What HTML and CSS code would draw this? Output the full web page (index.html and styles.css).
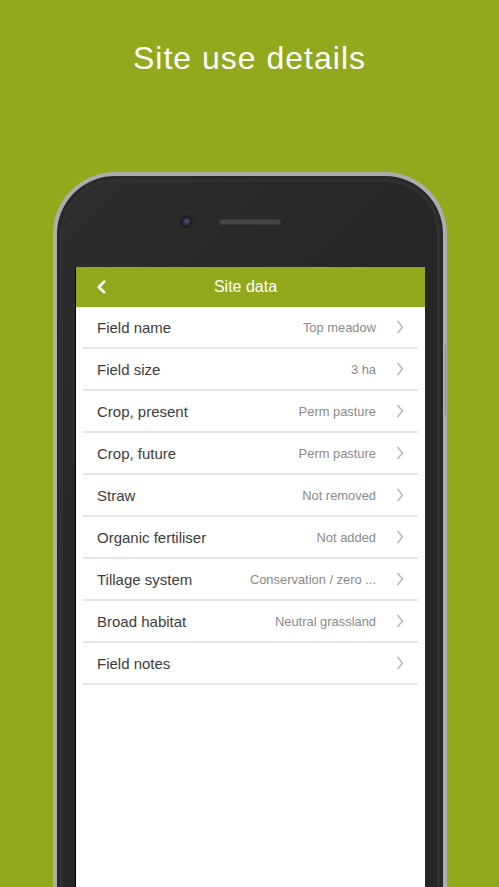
FILE: index.html
```html
<!DOCTYPE html>
<html lang="en">
<head>
<meta charset="utf-8">
<title>Site use details</title>
<link rel="stylesheet" href="styles.css">
</head>
<body>
  <h1 class="page-title">Site use details</h1>
  <div class="phone">
    <div class="phone-top">
      <span class="camera"></span>
      <span class="speaker"></span>
      <span class="spacer"></span>
    </div>
    <div class="screen">
      <header class="app-bar">
        <span class="back">
          <svg width="12" height="16" viewBox="0 0 12 16"><path d="M9.8 1.6 L3.4 8 L9.8 14.4" fill="none" stroke="#fff" stroke-width="3.2" stroke-linecap="round" stroke-linejoin="round"/></svg>
        </span>
        <span class="app-title">Site data</span>
        <span></span>
      </header>
      <ul class="list">
        <li class="row"><span class="label">Field name</span><span class="value">Top meadow</span><svg class="chev" width="8" height="14" viewBox="0 0 8 14"><path d="M1.5 1 L6.5 7 L1.5 13" fill="none" stroke="#b8b8b8" stroke-width="1.5"/></svg></li>
        <li class="row"><span class="label">Field size</span><span class="value">3 ha</span><svg class="chev" width="8" height="14" viewBox="0 0 8 14"><path d="M1.5 1 L6.5 7 L1.5 13" fill="none" stroke="#b8b8b8" stroke-width="1.5"/></svg></li>
        <li class="row"><span class="label">Crop, present</span><span class="value">Perm pasture</span><svg class="chev" width="8" height="14" viewBox="0 0 8 14"><path d="M1.5 1 L6.5 7 L1.5 13" fill="none" stroke="#b8b8b8" stroke-width="1.5"/></svg></li>
        <li class="row"><span class="label">Crop, future</span><span class="value">Perm pasture</span><svg class="chev" width="8" height="14" viewBox="0 0 8 14"><path d="M1.5 1 L6.5 7 L1.5 13" fill="none" stroke="#b8b8b8" stroke-width="1.5"/></svg></li>
        <li class="row"><span class="label">Straw</span><span class="value">Not removed</span><svg class="chev" width="8" height="14" viewBox="0 0 8 14"><path d="M1.5 1 L6.5 7 L1.5 13" fill="none" stroke="#b8b8b8" stroke-width="1.5"/></svg></li>
        <li class="row"><span class="label">Organic fertiliser</span><span class="value">Not added</span><svg class="chev" width="8" height="14" viewBox="0 0 8 14"><path d="M1.5 1 L6.5 7 L1.5 13" fill="none" stroke="#b8b8b8" stroke-width="1.5"/></svg></li>
        <li class="row"><span class="label">Tillage system</span><span class="value">Conservation / zero ...</span><svg class="chev" width="8" height="14" viewBox="0 0 8 14"><path d="M1.5 1 L6.5 7 L1.5 13" fill="none" stroke="#b8b8b8" stroke-width="1.5"/></svg></li>
        <li class="row"><span class="label">Broad habitat</span><span class="value">Neutral grassland</span><svg class="chev" width="8" height="14" viewBox="0 0 8 14"><path d="M1.5 1 L6.5 7 L1.5 13" fill="none" stroke="#b8b8b8" stroke-width="1.5"/></svg></li>
        <li class="row"><span class="label">Field notes</span><span class="value"></span><svg class="chev" width="8" height="14" viewBox="0 0 8 14"><path d="M1.5 1 L6.5 7 L1.5 13" fill="none" stroke="#b8b8b8" stroke-width="1.5"/></svg></li>
      </ul>
    </div>
  </div>
</body>
</html>
```

FILE: styles.css
```css
* { box-sizing: border-box; }
html, body {
  margin: 0;
  padding: 0;
}
body {
  background: #92a81d;
  height: 887px;
  overflow: hidden;
  font-family: "Liberation Sans", Arial, sans-serif;
}
.page-title {
  margin: 0;
  padding-top: 40px;
  line-height: 36px;
  font-size: 32px;
  font-weight: normal;
  letter-spacing: 1px;
  color: #fff;
  text-align: center;
}
.phone {
  position: relative;
  margin: 96px 0 0 53px;
  width: 394px;
  height: 760px;
  border: 4px solid #adadad;
  border-bottom: none;
  border-radius: 62px 62px 0 0;
  background: linear-gradient(135deg, #2e2e2e 0%, #262626 35%, #262626 100%);
  box-shadow: inset 0 0 0 3px #292929, inset 0 0 0 6px #313131;
  padding: 0 18px;
}
.phone::after {
  content: "";
  position: absolute;
  right: -3px;
  top: 169px;
  width: 1px;
  height: 70px;
  background: #8c8c8c;
}
.phone-top {
  height: 91px;
  display: flex;
  align-items: center;
  justify-content: center;
  gap: 26px;
}
.camera {
  width: 13px;
  height: 13px;
  border-radius: 50%;
  background: radial-gradient(circle at 50% 50%, #6a5f8a 0, #3b3456 2px, #2a2638 4px, #1c1c1c 5px, #202020 6.5px);
}
.speaker {
  width: 62px;
  height: 6px;
  border-radius: 3px;
  background: repeating-linear-gradient(90deg, #4e4e4e 0 1px, #3c3c3c 1px 2px);
  box-shadow: inset 0 0 0 1px #383838;
}
.spacer { width: 13px; height: 13px; }
.screen {
  background: #fff;
  border-left: 1px solid #000;
  height: 700px;
}
.app-bar {
  display: grid;
  grid-template-columns: 30px 1fr 40px;
  align-items: center;
  height: 40px;
  background: #92a81d;
}
.back {
  display: flex;
  padding-left: 20px;
}
.app-title {
  text-align: center;
  color: #fff;
  font-size: 16px;
}
.list {
  list-style: none;
  margin: 0 7px;
  padding: 0;
}
.row {
  display: flex;
  align-items: center;
  height: 42px;
  padding: 0 14px;
  border-bottom: 2px solid #e6e6e6;
}
.label {
  flex: 1;
  font-size: 15px;
  color: #3d3d3d;
}
.value {
  font-size: 12.9px;
  color: #8a8a8a;
  margin-right: 20px;
  white-space: nowrap;
}
.chev { display: block; }
```
